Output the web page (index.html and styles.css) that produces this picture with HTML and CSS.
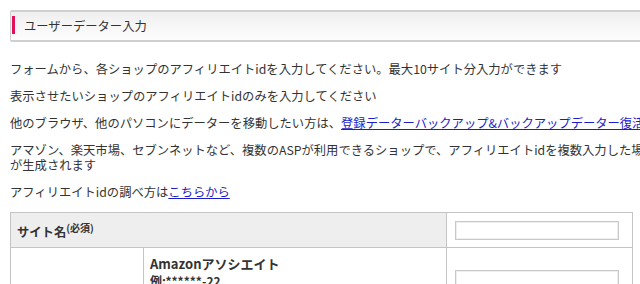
FILE: index.html
```html
<!DOCTYPE html>
<html lang="ja">
<head>
    <meta charset="UTF-8">
    <title>ユーザーデーター入力</title>
    <link rel="stylesheet" href="styles.css">
</head>
<body>
<div id="content">
    <h2 class="ttl">ユーザーデーター入力</h2>

    <p>フォームから、各ショップのアフィリエイトidを入力してください。最大10サイト分入力ができます</p>
    <p>表示させたいショップのアフィリエイトidのみを入力してください</p>
    <p>他のブラウザ、他のパソコンにデーターを移動したい方は、<a href="#">登録データーバックアップ&amp;バックアップデーター復活</a>をご利用ください</p>
    <p>アマゾン、楽天市場、セブンネットなど、複数のASPが利用できるショップで、アフィリエイトidを複数入力した場合、自動で複数のリンク が生成されます</p>
    <p>アフィリエイトidの調べ方は<a href="#">こちらから</a></p>

    <table class="form-tbl">
        <colgroup>
            <col class="c1">
            <col class="c2">
            <col class="c3">
        </colgroup>
        <tr>
            <th colspan="2" class="head">サイト名<sup>(必須)</sup></th>
            <td class="inp"><input type="text"></td>
        </tr>
        <tr>
            <td class="blank" rowspan="2"></td>
            <td class="asp">Amazonアソシエイト<br><span class="ex">例:******-22</span></td>
            <td class="inp low"><input type="text"></td>
        </tr>
    </table>
</div>
</body>
</html>
```

FILE: styles.css
```css
* {
    margin: 0;
    padding: 0;
}

html, body {
    overflow: hidden;
}

body {
    background: #fff;
    color: #333;
    font-family: "Noto Sans CJK JP", "Noto Sans", sans-serif;
    font-size: 12.3px;
    line-height: 15px;
}

#content {
    width: 770px;
    padding: 10px 0 0 10px;
}

.ttl {
    position: relative;
    height: 28px;
    border: 1px solid #cfcfcf;
    border-width: 2px 1px;
    border-radius: 2px;
    background: linear-gradient(#efefef, #fdfdfd);
    font-size: 12.3px;
    font-weight: normal;
    line-height: 28px;
    padding-left: 13px;
    color: #333;
    margin-bottom: 20px;
}

.ttl:before {
    content: "";
    position: absolute;
    left: 1px;
    top: 4px;
    width: 3px;
    height: 18px;
    background: #e0125a;
}

p {
    margin: 12px 0;
}

a {
    color: #1c1cc8;
}

.form-tbl {
    width: 622px;
    table-layout: fixed;
    border-collapse: collapse;
    margin-top: 12px;
}

.form-tbl .c1 {
    width: 133px;
}

.form-tbl .c2 {
    width: 303px;
}

.form-tbl .c3 {
    width: 186px;
}

.form-tbl th, .form-tbl td {
    border: 1px solid #c4c4c4;
    text-align: left;
    vertical-align: middle;
}

.form-tbl .head {
    height: 34px;
    background: #eee;
    padding-left: 6px;
    font-size: 12.3px;
}

.form-tbl sup {
    font-size: 10px;
    vertical-align: 5px;
}

.form-tbl .asp {
    padding: 7px 6px 0;
    vertical-align: top;
    font-weight: bold;
    font-size: 13px;
    line-height: 17px;
}

.form-tbl .ex {
    font-size: 12px;
}

.form-tbl .inp {
    padding: 0 8px;
}

.form-tbl .low {
    vertical-align: top;
    padding-top: 22px;
}

.form-tbl input {
    display: block;
    width: 164px;
    height: 19px;
    border: 1px solid #c8c8c8;
    box-shadow: inset 0 0 0 1px #eee;
    box-sizing: border-box;
}
```
